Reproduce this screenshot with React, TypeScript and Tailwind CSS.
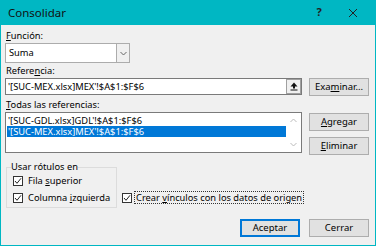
import React from "react";

const font = { fontFamily: '"Noto Sans", "Open Sans", sans-serif' };

function Box() {
  return (
    <span className="w-[10px] h-[10px] shrink-0 border border-[#333] bg-white flex items-center justify-center">
      <svg width="8" height="8" viewBox="0 0 8 8">
        <polyline points="1,4 3,6.3 7,1.3" fill="none" stroke="#222" strokeWidth="1" />
      </svg>
    </span>
  );
}

function Check({ ul, rest, before = "" }: { ul: string; rest: string; before?: string }) {
  return (
    <div className="flex items-center gap-[5px] h-[12px] whitespace-nowrap">
      <Box />
      <span className="leading-[12px]">
        {before}
        <u>{ul}</u>
        {rest}
      </span>
    </div>
  );
}

function Btn({ children, focused }: { children: React.ReactNode; focused?: boolean }) {
  return (
    <button
      className={
        "w-[60px] h-[18px] bg-[#e1e1e1] text-[9.5px] leading-[14px] text-black " +
        (focused ? "border-2 border-[#0078d7]" : "border border-[#adadad]")
      }
    >
      {children}
    </button>
  );
}

export default function App() {
  return (
    <div className="w-[376px] h-[246px] bg-[#f0f0f0] flex flex-col text-[9.3px] text-black" style={font}>
      {/* Title bar */}
      <div className="h-[25px] bg-[#00b7c3] flex items-center pl-[8px] shrink-0">
        <span className="text-[11.5px] text-[#111]">Consolidar</span>
        <span className="ml-auto w-[22px] text-center text-[11px] font-bold text-[#222]">?</span>
        <span className="w-[46px] flex justify-center">
          <svg width="10" height="10" viewBox="0 0 10 10">
            <path d="M1 1 L9 9 M9 1 L1 9" stroke="#222" strokeWidth="1" />
          </svg>
        </span>
      </div>

      {/* Body */}
      <div className="flex-1 border-x border-b border-[#00b7c3] pl-[4px] pr-[6px] flex flex-col">
        <div className="flex gap-[7px]">
          {/* Left column */}
          <div className="w-[297px] flex flex-col">
            <div className="h-[14px] mt-[4px] leading-[14px] pl-[1px]">
              <u>F</u>unción:
            </div>
            <div className="w-[125px] h-[20px] bg-white border border-[#acacac] flex items-stretch">
              <span className="flex-1 pl-[3px] leading-[18px]">Suma</span>
              <span className="w-[13px] bg-[#f0f0f0] border-l border-[#acacac] flex items-center justify-center">
                <svg width="7" height="5" viewBox="0 0 7 5">
                  <polyline points="0.5,1 3.5,4 6.5,1" fill="none" stroke="#666" strokeWidth="1" />
                </svg>
              </span>
            </div>
            <div className="h-[15px] leading-[15px] pl-[1px]">
              Refere<u>n</u>cia:
            </div>
            <div className="h-[17px] bg-white border border-[#7a7a7a] flex items-stretch">
              <span className="flex-1 pl-[2px] leading-[15px]">'[SUC-MEX.xlsx]MEX'!$A$1:$F$6</span>
              <span className="w-[15px] border border-[#a0a0a0] bg-[#f0f0f0] flex items-center justify-center">
                <svg width="8" height="9" viewBox="0 0 8 9">
                  <path d="M4 0.5 L7.5 4.5 L5 4.5 L5 6.5 L3 6.5 L3 4.5 L0.5 4.5 Z" fill="#111" />
                  <rect x="0.5" y="7.5" width="7" height="1" fill="#111" />
                </svg>
              </span>
            </div>
            <div className="h-[17px] leading-[19px] pl-[1px]">
              <u>T</u>odas las referencias:
            </div>
            <div className="h-[41px] bg-white border border-[#7a7a7a] flex">
              <div className="flex-1 pt-[2px] pl-[1px] flex flex-col">
                <div className="h-[11px] leading-[11px] pl-[1px]">'[SUC-GDL.xlsx]GDL'!$A$1:$F$6</div>
                <div className="h-[11px] leading-[11px] pl-[1px] bg-[#0078d7] text-white">
                  '[SUC-MEX.xlsx]MEX'!$A$1:$F$6
                </div>
              </div>
              <div className="w-[15px] flex flex-col items-center justify-between py-[5px]">
                <svg width="7" height="5" viewBox="0 0 7 5">
                  <polyline points="0.5,4 3.5,1 6.5,4" fill="none" stroke="#bbb" strokeWidth="1" />
                </svg>
                <svg width="7" height="5" viewBox="0 0 7 5">
                  <polyline points="0.5,1 3.5,4 6.5,1" fill="none" stroke="#bbb" strokeWidth="1" />
                </svg>
              </div>
            </div>
          </div>

          {/* Right column */}
          <div className="w-[60px] flex flex-col pt-[53px]">
            <Btn>
              Exa<u>m</u>inar...
            </Btn>
            <div className="h-[17px]" />
            <Btn>
              <u>A</u>gregar
            </Btn>
            <div className="h-[6px]" />
            <Btn>
              <u>E</u>liminar
            </Btn>
          </div>
        </div>

        {/* Labels group */}
        <div className="flex items-end mt-[6px]">
          <fieldset className="ml-[1px] w-[111px] h-[47px] border border-[#dcdcdc] pl-[6px] pt-[2px]">
            <legend className="-ml-[2px] px-0 leading-[12px]">Usar rótulos en</legend>
            <div className="flex flex-col gap-[5px]">
              <Check before="Fila " ul="s" rest="uperior" />
              <Check before="Columna " ul="i" rest="zquierda" />
            </div>
          </fieldset>
          <div className="ml-[5px] mb-[4px] flex items-center gap-[2px] whitespace-nowrap">
            <Box />
            <span className="border border-dotted border-[#333] px-[1px] leading-[11px]">
              Crear <u>v</u>ínculos con los datos de origen
            </span>
          </div>
        </div>

        {/* Footer buttons */}
        <div className="flex justify-end gap-[9px] mt-[11px]">
          <Btn focused>Aceptar</Btn>
          <Btn>Cerrar</Btn>
        </div>
      </div>
    </div>
  );
}
